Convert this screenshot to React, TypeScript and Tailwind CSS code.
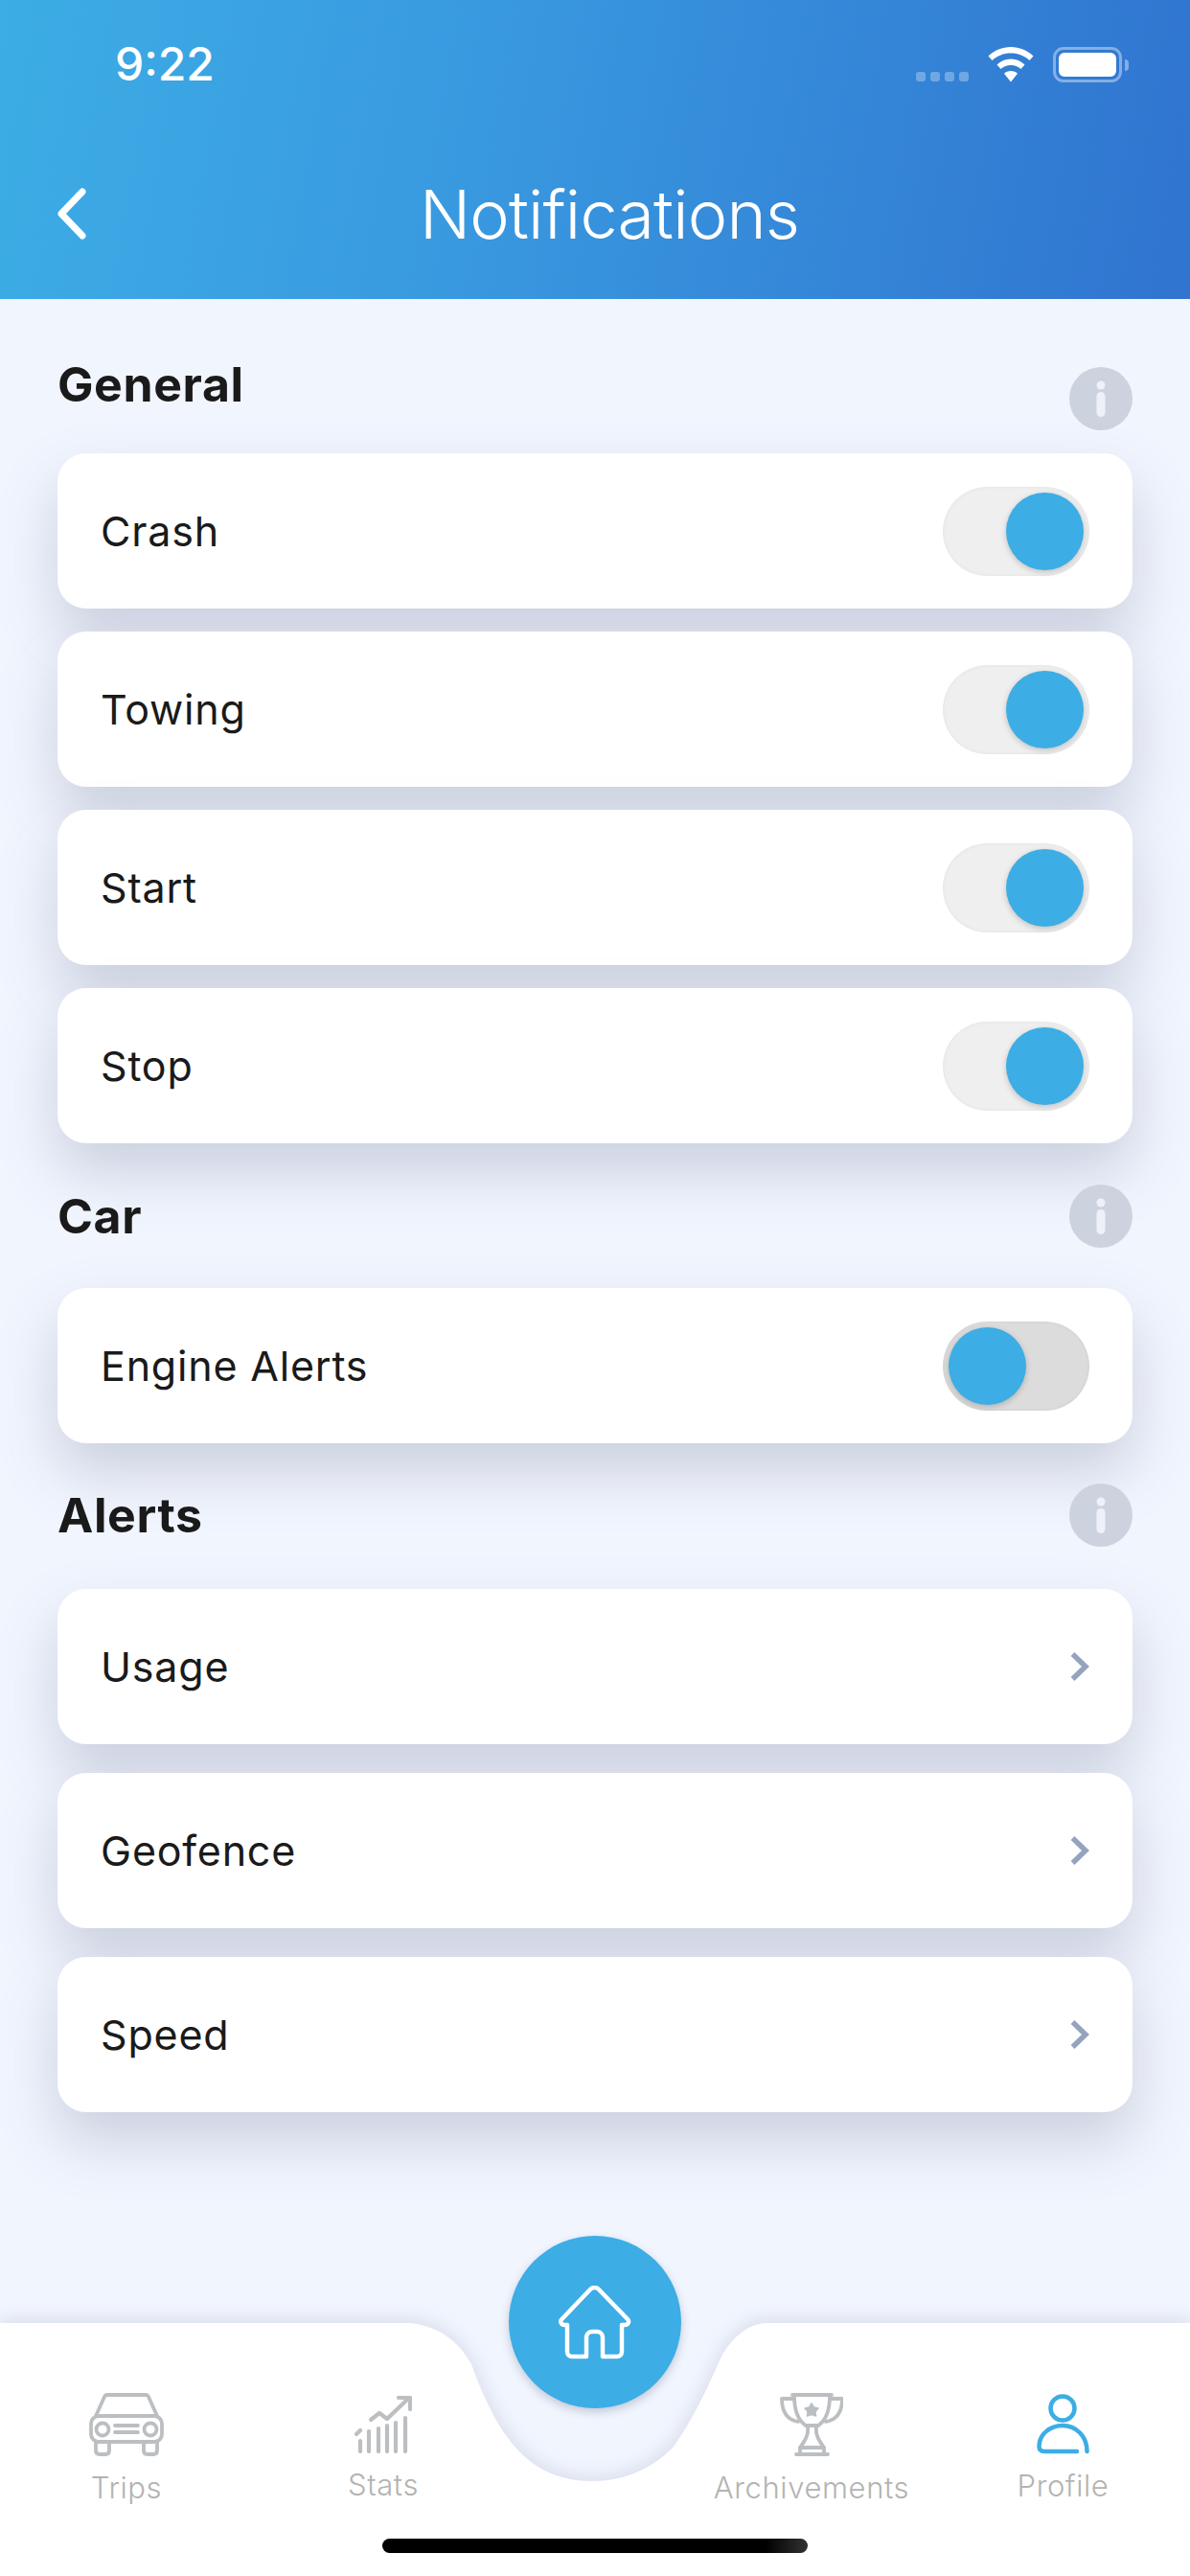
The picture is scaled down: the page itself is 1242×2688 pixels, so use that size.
import { type ReactNode } from 'react';

const UI_FONT = "font-['Inter','Liberation_Sans',sans-serif]";

function InfoIcon() {
  return (
    <svg width="66" height="66" viewBox="0 0 66 66" className="shrink-0">
      <circle cx="33" cy="33" r="33" fill="#cdd2df" />
      <circle cx="33" cy="19" r="4.5" fill="#eef1f9" />
      <rect x="28.5" y="26" width="9" height="26" rx="4.5" fill="#eef1f9" />
    </svg>
  );
}

function SectionHeading({ title, raised }: { title: string; raised?: boolean }) {
  return (
    <div className="flex justify-between items-center h-[66px]">
      <h2 className={`text-[50px] leading-[60px] font-bold tracking-[0.6px] text-[#1a1a1a] ${raised ? 'pb-[30px]' : ''}`}>{title}</h2>
      <InfoIcon />
    </div>
  );
}

function Toggle({ on }: { on?: boolean }) {
  return (
    <div className={`w-[153px] h-[93px] rounded-full p-[6px] flex shadow-[inset_0_0_4px_rgba(0,0,0,0.06)] ${on ? 'bg-[#efefef] justify-end' : 'bg-[#dcdcdc] justify-start'}`}>
      <div className="w-[81px] h-[81px] rounded-full bg-[#3cade5] shadow-[0_2px_6px_rgba(0,0,0,0.2)]" />
    </div>
  );
}

function Card({ label, children }: { label: string; children: ReactNode }) {
  return (
    <div className="h-[162px] bg-white rounded-[30px] flex items-center justify-between pl-[45px] pr-[45px] shadow-[0_30px_60px_rgba(90,100,130,0.25)]">
      <span className="text-[43px] tracking-[0.8px] text-[#1a1a1a]">{label}</span>
      {children}
    </div>
  );
}

function Chevron() {
  return (
    <svg width="20" height="30" viewBox="0 0 20 30" fill="none" stroke="#95a3be" strokeWidth="5.5">
      <path d="M2.5 2 L16 15 L2.5 28" />
    </svg>
  );
}

function TabItem({ label, width, labelClass, children }: { label: string; width: string; labelClass?: string; children: ReactNode }) {
  return (
    <div className={`flex flex-col items-center ${width}`}>
      <div className="h-[68px] flex items-center">{children}</div>
      <span className={`text-[31px] leading-[40px] font-light tracking-[0.6px] text-[#b3b3b3] ${labelClass ?? ''}`}>{label}</span>
    </div>
  );
}

export default function App() {
  return (
    <div className={`relative w-[1242px] h-[2688px] overflow-hidden flex flex-col bg-[#f1f5fe] ${UI_FONT}`}>
      {/* header */}
      <header className="h-[312px] shrink-0 bg-[linear-gradient(100deg,#3cade5_0%,#399ae0_38%,#3074d0_100%)] text-white">
        <div className="h-[134px] flex items-center pl-[120px] pr-[71px]">
          <span className="text-[48px] font-medium flex-1">9:22</span>
          <div className="flex items-end gap-[5px] mt-[26px]">
            <div className="w-[10px] h-[10px] rounded-[3px] bg-white/30" />
            <div className="w-[10px] h-[10px] rounded-[3px] bg-white/30" />
            <div className="w-[10px] h-[10px] rounded-[3px] bg-white/30" />
            <div className="w-[10px] h-[10px] rounded-[3px] bg-white/30" />
          </div>
          <svg width="48" height="37" viewBox="0 0 48 37" fill="white" className="ml-[20px]">
            <path d="M24 0 C33 0 41 3.500 47.500 9.500 L43.500 14 C38 9 31.500 6.500 24 6.500 C16.500 6.500 10 9 4.500 14 L0.500 9.500 C7 3.500 15 0 24 0 Z" />
            <path d="M24 12.500 C29.500 12.500 34.500 14.500 38.500 18.500 L34.500 23 C31.500 20.200 28 19 24 19 C20 19 16.500 20.200 13.500 23 L9.500 18.500 C13.500 14.500 18.500 12.500 24 12.500 Z" />
            <path d="M24 25 C26.800 25 29.200 26 31 27.800 L24 36.500 L17 27.800 C18.800 26 21.200 25 24 25 Z" />
          </svg>
          <div className="ml-[20px] relative w-[72px] h-[37px] rounded-[11px] border-[3px] border-white/40 p-[3px]">
            <div className="w-full h-full rounded-[6px] bg-white" />
            <div className="absolute -right-[10px] top-[10px] w-[4px] h-[12px] rounded-r-full bg-white/40" />
          </div>
        </div>
        <div className="h-[178px] flex items-center px-[60px]">
          <svg width="30" height="54" viewBox="0 0 30 54" fill="none" stroke="white" strokeWidth="7" strokeLinecap="round" strokeLinejoin="round">
            <path d="M26 4 L4 27 L26 50" />
          </svg>
          <h1 className="flex-1 text-center text-[70px] font-light tracking-[-0.8px]">Notifications</h1>
        </div>
      </header>

      {/* settings */}
      <main className="flex-1 px-[60px] pt-[71px]">
        <SectionHeading title="General" raised />
        <div className="mt-[24px] flex flex-col gap-[24px]">
          {['Crash', 'Towing', 'Start', 'Stop'].map((label) => (
            <Card key={label} label={label}>
              <Toggle on />
            </Card>
          ))}
        </div>

        <div className="mt-[43px]">
          <SectionHeading title="Car" />
        </div>
        <div className="mt-[42px]">
          <Card label="Engine Alerts">
            <Toggle />
          </Card>
        </div>

        <div className="mt-[42px]">
          <SectionHeading title="Alerts" />
        </div>
        <div className="mt-[44px] flex flex-col gap-[30px]">
          {['Usage', 'Geofence', 'Speed'].map((label) => (
            <Card key={label} label={label}>
              <Chevron />
            </Card>
          ))}
        </div>
      </main>

      {/* tab bar */}
      <nav className="relative h-[264px] shrink-0">
        <svg width="1242" height="264" viewBox="0 0 1242 264" className="absolute inset-0 drop-shadow-[0_-2px_10px_rgba(110,120,150,0.22)]">
          <path
            fill="white"
            d="M-20 0 H429 C458 4 478 18 492 43 C506 82 520 108 534 125 C556 153 585 165 618 165 C650 165 680 153 703 129 C720 105 738 70 751 39 C761 18 778 2 798 0 H1262 V300 H-20 Z"
          />
        </svg>

        <div className="absolute left-[531px] -top-[91px] w-[180px] h-[180px] rounded-full bg-[#3cade5] shadow-[0_4px_10px_rgba(60,70,100,0.25)] flex items-center justify-center">
          <svg width="76" height="77" viewBox="0 0 76 77" fill="none" stroke="white" strokeWidth="4.500" strokeLinejoin="round">
            <path d="M29 74 H14 a5 5 0 0 1 -5 -5 V41 H6 a3.500 3.500 0 0 1 -2.600 -6 L33 4 a6 6 0 0 1 9 0 L72 35 a3.500 3.500 0 0 1 -2.600 6 H66 V69 a5 5 0 0 1 -5 5 H46 V54 a6 6 0 0 0 -6 -6 H35 a6 6 0 0 0 -6 6 Z" />
          </svg>
        </div>

        <div className="relative flex pt-[72px]">
          <TabItem label="Trips" width="w-[264px]" labelClass="mt-[12px]">
            <svg width="78" height="66" viewBox="0 0 78 66" fill="none" stroke="#bcbfc2" strokeWidth="3.800" strokeLinecap="round" strokeLinejoin="round">
              <path d="M7 24 L16 4 Q17 2 19 2 H59 Q61 2 62 4 L71 24" />
              <rect x="2" y="24" width="74" height="27" rx="8" />
              <circle cx="14" cy="38" r="6.500" />
              <circle cx="64" cy="38" r="6.500" />
              <path d="M27 34 H51 M27 41 H51" />
              <path d="M7 51 V60 Q7 64 11 64 H17 Q21 64 21 60 V51 M57 51 V60 Q57 64 61 64 H67 Q71 64 71 60 V51" />
            </svg>
          </TabItem>
          <TabItem label="Stats" width="w-[272px]" labelClass="mt-[9px]">
            <svg width="60" height="60" viewBox="0 0 60 60" fill="none" stroke="#bcbfc2" strokeWidth="4.200" strokeLinecap="round" strokeLinejoin="round">
              <path d="M6 47 V58 M15 37 V58 M25 34 V58 M34 31 V58 M43 28 V58 M53 23 V58" />
              <path d="M2 40 L6 36" />
              <path d="M17 25 L26 18 L34 24 L56 3" />
              <path d="M46 2 H58 V14" />
            </svg>
          </TabItem>
          <div className="w-[181px]" />
          <TabItem label="Archivements" width="w-[260px]" labelClass="mt-[12px]">
            <svg width="66" height="67" viewBox="0 0 66 67" fill="none" stroke="#bcbfc2" strokeWidth="3.800" strokeLinecap="round" strokeLinejoin="round">
              <path d="M13 2 H54" />
              <path d="M15 3 C15 18 18 28 27 34 M52 3 C52 18 49 28 40 34" />
              <path d="M27 34 H40" />
              <path d="M14 6 H2 C2 20 8 28 19 30 M53 6 H65 C65 20 59 28 48 30" />
              <path d="M29 36 C30 44 26 50 21 57 H46 C41 50 37 44 38 36" />
              <path d="M21 57 V64 M46 57 V64 M17 64 H50" />
              <path fill="#bcbfc2" strokeWidth="1.500" d="M33 11 L35.500 15 L40 16 L37 19.500 L37.500 24 L33 22.500 L28.500 24 L29 19.500 L26 16 L30.500 15 Z" />
            </svg>
          </TabItem>
          <TabItem label="Profile" width="w-[265px]" labelClass="mt-[10px]">
            <svg width="56" height="64" viewBox="0 0 56 64" fill="none" stroke="#3cade5" strokeWidth="4.500" strokeLinecap="round" strokeLinejoin="round">
              <circle cx="27" cy="15" r="12.500" />
              <path d="M42 60 H8 C4 60 2.500 58 2.500 55 C2.500 42 14 33 27 33 C41 33 52.500 44 52.500 60" />
            </svg>
          </TabItem>
        </div>

        <div className="absolute left-[399px] top-[225px] w-[444px] h-[15px] rounded-full bg-[linear-gradient(90deg,#000_90%,#333_100%)]" />
      </nav>
    </div>
  );
}
